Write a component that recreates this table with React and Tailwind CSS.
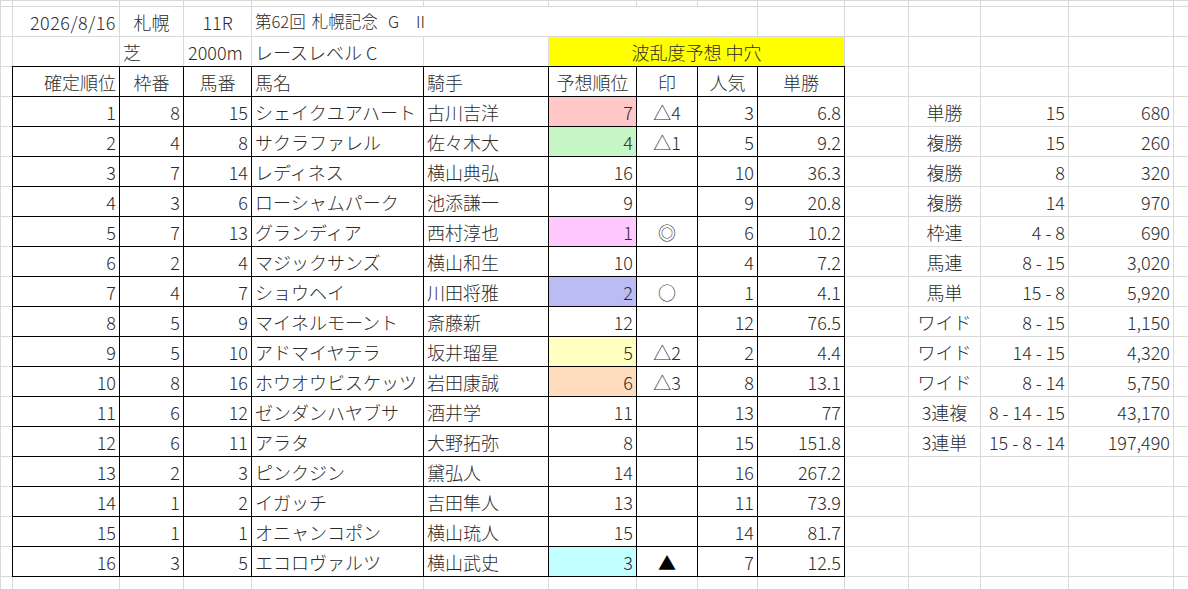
const FONT = "font-['Noto_Sans_CJK_JP','Noto_Sans',sans-serif]";

const g = 'border border-solid border-[#d9d9d9]';
const b = 'border border-double border-black';

const horses = [
  [1, 8, 15, 'シェイクユアハート', '古川吉洋', 7, '△4', 3, '6.8', 'bg-[#ffc7c7]'],
  [2, 4, 8, 'サクラファレル', '佐々木大', 4, '△1', 5, '9.2', 'bg-[#c6f5c6]'],
  [3, 7, 14, 'レディネス', '横山典弘', 16, '', 10, '36.3', ''],
  [4, 3, 6, 'ローシャムパーク', '池添謙一', 9, '', 9, '20.8', ''],
  [5, 7, 13, 'グランディア', '西村淳也', 1, '◎', 6, '10.2', 'bg-[#ffc8ff]'],
  [6, 2, 4, 'マジックサンズ', '横山和生', 10, '', 4, '7.2', ''],
  [7, 4, 7, 'ショウヘイ', '川田将雅', 2, '○', 1, '4.1', 'bg-[#bcbcf4]'],
  [8, 5, 9, 'マイネルモーント', '斎藤新', 12, '', 12, '76.5', ''],
  [9, 5, 10, 'アドマイヤテラ', '坂井瑠星', 5, '△2', 2, '4.4', 'bg-[#ffffc2]'],
  [10, 8, 16, 'ホウオウビスケッツ', '岩田康誠', 6, '△3', 8, '13.1', 'bg-[#ffdcbe]'],
  [11, 6, 12, 'ゼンダンハヤブサ', '酒井学', 11, '', 13, '77', ''],
  [12, 6, 11, 'アラタ', '大野拓弥', 8, '', 15, '151.8', ''],
  [13, 2, 3, 'ピンクジン', '黛弘人', 14, '', 16, '267.2', ''],
  [14, 1, 2, 'イガッチ', '吉田隼人', 13, '', 11, '73.9', ''],
  [15, 1, 1, 'オニャンコポン', '横山琉人', 15, '', 14, '81.7', ''],
  [16, 3, 5, 'エコロヴァルツ', '横山武史', 3, '▲', 7, '12.5', 'bg-[#c2ffff]'],
];

const payouts = [
  ['単勝', '15', '680'],
  ['複勝', '15', '260'],
  ['複勝', '8', '320'],
  ['複勝', '14', '970'],
  ['枠連', '4 - 8', '690'],
  ['馬連', '8 - 15', '3,020'],
  ['馬単', '15 - 8', '5,920'],
  ['ワイド', '8 - 15', '1,150'],
  ['ワイド', '14 - 15', '4,320'],
  ['ワイド', '8 - 14', '5,750'],
  ['3連複', '8 - 14 - 15', '43,170'],
  ['3連単', '15 - 8 - 14', '197,490'],
];

function Td({ className = '', children, ...rest }) {
  return (
    <td className={`h-[30px] px-[3px] py-0 align-middle whitespace-nowrap overflow-visible ${className}`} {...rest}>
      {children}
    </td>
  );
}

export default function App() {
  return (
    <div className={`h-[589px] w-[1188px] overflow-hidden bg-white text-[18px] font-light leading-none text-[#2b2b2b] ${FONT}`}>
      <table className="table-fixed border-collapse w-[1200px]">
        <colgroup>
          <col className="w-[12px]" />
          <col className="w-[107px]" />
          <col className="w-[64px]" />
          <col className="w-[68px]" />
          <col className="w-[172px]" />
          <col className="w-[125px]" />
          <col className="w-[88px]" />
          <col className="w-[61px]" />
          <col className="w-[60px]" />
          <col className="w-[87px]" />
          <col className="w-[64px]" />
          <col className="w-[72px]" />
          <col className="w-[88px]" />
          <col className="w-[105px]" />
          <col className="w-[27px]" />
        </colgroup>
        <tbody>
          {/* top sliver row */}
          <tr>
            {Array.from({ length: 15 }).map((_, i) => (
              <td key={i} className={`h-[6px] p-0 ${g}`} />
            ))}
          </tr>

          {/* race info */}
          <tr>
            <Td className={g} />
            <Td className={`${g} text-right tracking-[0.5px]`}>2026/8/16</Td>
            <Td className={`${g} text-center`}>札幌</Td>
            <Td className={`${g} text-center`}>11R</Td>
            <Td className={g} colSpan={5}>
              <div className="flex w-[170px] items-center text-[16.5px]">
                <span>第62回</span>
                <span className="ml-[6px]">札幌記念</span>
                <span className="ml-auto">G</span>
                <span className="ml-[17px]">II</span>
              </div>
            </Td>
            <Td className={g} />
            <Td className={g} />
            <Td className={g} />
            <Td className={g} />
            <Td className={g} />
            <Td className={g} />
          </tr>
          <tr>
            <Td className={g} />
            <Td className={g} />
            <Td className={g}>芝</Td>
            <Td className={`${g} pl-[4px]`}>2000m</Td>
            <Td className={g}>レースレベル C</Td>
            <Td className={g} />
            <Td className={`${g} bg-[#ffff00] text-center`} colSpan={4}>波乱度予想 中穴</Td>
            <Td className={g} />
            <Td className={g} />
            <Td className={g} />
            <Td className={g} />
            <Td className={g} />
          </tr>

          {/* header */}
          <tr>
            <Td className={g} />
            <Td className={`${b} text-right`}>確定順位</Td>
            <Td className={`${b} text-center`}>枠番</Td>
            <Td className={`${b} text-center`}>馬番</Td>
            <Td className={b}>馬名</Td>
            <Td className={b}>騎手</Td>
            <Td className={`${b} text-center`}>予想順位</Td>
            <Td className={`${b} text-center`}>印</Td>
            <Td className={`${b} text-center`}>人気</Td>
            <Td className={`${b} text-center`}>単勝</Td>
            <Td className={g} />
            <Td className={g} />
            <Td className={g} />
            <Td className={g} />
            <Td className={g} />
          </tr>

          {horses.map((h, i) => {
            const p = payouts[i];
            return (
              <tr key={h[0]}>
                <Td className={g} />
                <Td className={`${b} text-right`}>{h[0]}</Td>
                <Td className={`${b} text-right`}>{h[1]}</Td>
                <Td className={`${b} text-right`}>{h[2]}</Td>
                <Td className={b}>{h[3]}</Td>
                <Td className={b}>{h[4]}</Td>
                <Td className={`${b} text-right ${h[9]}`}>{h[5]}</Td>
                <Td className={`${b} text-center ${h[6] === '▲' ? 'text-black' : ''}`}>{h[6]}</Td>
                <Td className={`${b} text-right`}>{h[7]}</Td>
                <Td className={`${b} text-right`}>{h[8]}</Td>
                <Td className={g} />
                <Td className={`${g} text-center`}>{p ? p[0] : ''}</Td>
                <Td className={`${g} text-right`}>{p ? p[1] : ''}</Td>
                <Td className={`${g} text-right`}>{p ? p[2] : ''}</Td>
                <Td className={g} />
              </tr>
            );
          })}

          <tr>
            {Array.from({ length: 15 }).map((_, i) => (
              <Td key={i} className={g} />
            ))}
          </tr>
        </tbody>
      </table>
    </div>
  );
}
